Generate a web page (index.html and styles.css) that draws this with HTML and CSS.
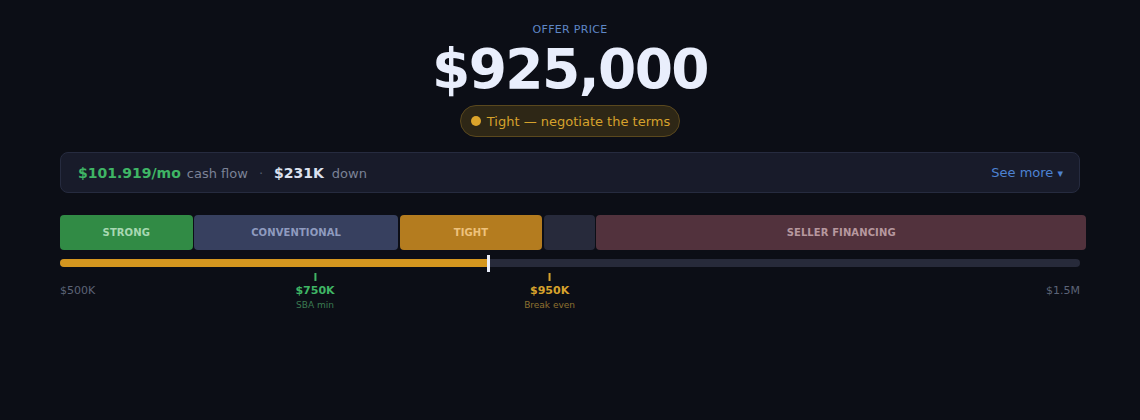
FILE: index.html
```html
<!doctype html>
<html lang="en">
<head>
    <meta charset="UTF-8">
    <title>Offer price</title>
    <link rel="stylesheet" href="styles.css">
</head>
<body>
<div class="wrap">
    <div class="head">
        <div class="label">OFFER PRICE</div>
        <div class="price">$925,000</div>
        <div class="badge"><span class="dot"></span>Tight — negotiate the terms</div>
    </div>

    <div class="summary">
        <div class="stats">
            <b class="green">$101.919/mo</b>
            <span class="muted">cash flow</span>
            <span class="sep">·</span>
            <b class="white">$231K</b>
            <span class="muted">down</span>
        </div>
        <span class="more">See more <small>▾</small></span>
    </div>

    <div class="zones">
        <div class="zone strong" style="width:13%">STRONG</div>
        <div class="zone conv" style="width:20%">CONVENTIONAL</div>
        <div class="zone tight" style="width:14%">TIGHT</div>
        <div class="zone gap" style="width:5%"></div>
        <div class="zone seller" style="width:48%">SELLER FINANCING</div>
    </div>

    <div class="track">
        <div class="fill" style="width:42%"></div>
        <div class="marker" style="left:42%"></div>
    </div>

    <div class="scale">
        <span class="end">$500K</span>
        <div class="tick sba" style="left:25%">
            <i></i>
            <strong>$750K</strong>
            <small>SBA min</small>
        </div>
        <div class="tick even" style="left:48%">
            <i></i>
            <strong>$950K</strong>
            <small>Break even</small>
        </div>
        <span class="end">$1.5M</span>
    </div>
</div>
</body>
</html>
```

FILE: styles.css
```css
body{
    margin:0;
    background-color:#0c0e16;
    font-family:"DejaVu Sans", sans-serif;
}

.wrap{
    width:1020px;
    margin:0 auto;
    padding-top:23px;
}

.head{
    display:flex;
    flex-direction:column;
    align-items:center;
}
.label{
    font-size:11px;
    line-height:14px;
    color:#5f87c6;
    letter-spacing:.3px;
}
.price{
    font-size:55px;
    line-height:62px;
    font-weight:bold;
    color:#e9eefc;
    letter-spacing:-1.6px;
    margin-top:1px;
}
.badge{
    display:flex;
    align-items:center;
    height:30px;
    margin-top:5px;
    padding:0 9px 0 10px;
    border:1px solid #5a481e;
    border-radius:16px;
    background-color:#2e2716;
    color:#d6a22c;
    font-size:13px;
}
.dot{
    width:10px;
    height:10px;
    border-radius:50%;
    background-color:#dca42b;
    margin-right:6px;
}

.summary{
    display:flex;
    align-items:center;
    justify-content:space-between;
    height:39px;
    margin-top:15px;
    padding:0 16px 0 17px;
    border:1px solid #262b3f;
    border-radius:8px;
    background-color:#181b2a;
    font-size:13px;
}
.stats{
    display:flex;
    align-items:baseline;
}
.green{
    color:#3fb565;
    font-size:14px;
    margin-right:6px;
}
.white{
    color:#dce1ef;
    font-size:14px;
    margin-right:8px;
}
.muted{
    color:#7b8296;
}
.sep{
    color:#555c70;
    margin:0 11px;
}
.more{
    color:#4d82d2;
    font-size:13px;
}
.more small{
    font-size:11px;
}

.zones{
    display:flex;
    gap:1.5px;
    margin-top:22px;
}
.zone{
    flex-shrink:0;
    height:35px;
    border-radius:4px;
    display:flex;
    align-items:center;
    justify-content:center;
    font-size:10px;
    font-weight:bold;
    letter-spacing:.1px;
}
.strong{
    background-color:#318b45;
    color:#a8d8b2;
}
.conv{
    background-color:#37405f;
    color:#8f9bbf;
}
.tight{
    background-color:#b47c1f;
    color:#eec27c;
}
.gap{
    background-color:#272a3b;
}
.seller{
    background-color:#52323d;
    color:#b7989f;
}

.track{
    position:relative;
    height:8px;
    margin-top:9px;
    border-radius:4px;
    background-color:#272a3a;
}
.fill{
    height:100%;
    border-radius:4px 0 0 4px;
    background-color:#d4961f;
}
.marker{
    position:absolute;
    top:-4px;
    width:3px;
    height:17px;
    margin-left:-1px;
    background-color:#e8ecf8;
}

.scale{
    position:relative;
    display:flex;
    justify-content:space-between;
    height:50px;
    margin-top:6px;
}
.end{
    margin-top:11px;
    font-size:11px;
    line-height:14px;
    color:#5c6377;
}
.tick{
    position:absolute;
    top:0;
    display:flex;
    flex-direction:column;
    align-items:center;
    transform:translateX(-50%);
}
.tick i{
    width:2px;
    height:8px;
}
.tick strong{
    margin-top:3px;
    font-size:11px;
    line-height:14px;
}
.tick small{
    font-size:9px;
    line-height:12px;
    margin-top:1px;
}
.sba i{ background-color:#3fb565; }
.sba strong{ color:#3fb565; }
.sba small{ color:#3b7a52; }
.even i{ background-color:#d6a22c; }
.even strong{ color:#d6a22c; }
.even small{ color:#8e7130; }
```
